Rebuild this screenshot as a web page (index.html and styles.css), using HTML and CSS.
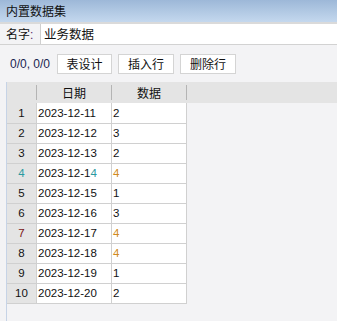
FILE: index.html
```html
<!DOCTYPE html>
<html lang="zh">
<head>
<meta charset="utf-8">
<title>内置数据集</title>
<link rel="stylesheet" href="styles.css">
</head>
<body>
<div class="window">
  <div class="titlebar">内置数据集</div>
  <div class="name-row">
    <span class="name-label">名字<span class="colon">:</span></span>
    <div class="name-input">业务数据</div>
  </div>
  <div class="toolbar">
    <span class="pos">0/0, 0/0</span>
    <button class="btn btn-design">表设计</button>
    <button class="btn">插入行</button>
    <button class="btn">删除行</button>
  </div>
  <div class="grid">
    <div class="head">
      <div class="hcell c-num"></div>
      <div class="hcell c-date">日期</div>
      <div class="hcell c-val">数据</div>
    </div>
    <div class="row"><div class="cell c-num">1</div><div class="cell c-date">2023-12-11</div><div class="cell c-val">2</div></div>
    <div class="row"><div class="cell c-num">2</div><div class="cell c-date">2023-12-12</div><div class="cell c-val">3</div></div>
    <div class="row"><div class="cell c-num">3</div><div class="cell c-date">2023-12-13</div><div class="cell c-val">2</div></div>
    <div class="row"><div class="cell c-num"><span class="t-teal">4</span></div><div class="cell c-date">2023-12-1<span class="t-teal">4</span></div><div class="cell c-val"><span class="t-orange">4</span></div></div>
    <div class="row"><div class="cell c-num">5</div><div class="cell c-date">2023-12-15</div><div class="cell c-val">1</div></div>
    <div class="row"><div class="cell c-num">6</div><div class="cell c-date">2023-12-16</div><div class="cell c-val">3</div></div>
    <div class="row"><div class="cell c-num"><span class="t-red">7</span></div><div class="cell c-date">2023-12-17</div><div class="cell c-val"><span class="t-orange">4</span></div></div>
    <div class="row"><div class="cell c-num">8</div><div class="cell c-date">2023-12-18</div><div class="cell c-val"><span class="t-orange">4</span></div></div>
    <div class="row"><div class="cell c-num">9</div><div class="cell c-date">2023-12-19</div><div class="cell c-val">1</div></div>
    <div class="row"><div class="cell c-num">10</div><div class="cell c-date">2023-12-20</div><div class="cell c-val">2</div></div>
  </div>
</div>
</body>
</html>
```

FILE: styles.css
```css
html, body {
  margin: 0;
  padding: 0;
}
body {
  width: 337px;
  height: 321px;
  overflow: hidden;
  background: #f3f3f5;
  font-family: "Noto Sans CJK SC", "Liberation Sans", sans-serif;
  font-size: 12px;
  color: #111;
}
.window {
  display: flex;
  flex-direction: column;
  height: 321px;
}
.titlebar {
  height: 22px;
  line-height: 22px;
  padding-left: 6px;
  background: linear-gradient(#9db8d8, #c4d8ee);
  border-bottom: 2px solid #dadada;
  color: #111;
  font-size: 12px;
}
.name-row {
  display: flex;
  height: 20px;
  border-bottom: 1px solid #d2d2d2;
}
.name-label {
  width: 34px;
  padding-left: 6px;
  line-height: 20px;
  font-size: 12px;
}
.colon {
  color: #5a2a6a;
  font-family: "Liberation Sans", sans-serif;
}
.name-input {
  flex: 1;
  background: #fff;
  border-left: 1px solid #cfcfcf;
  padding-left: 3px;
  line-height: 20px;
  font-size: 12.5px;
}
.toolbar {
  display: flex;
  align-items: center;
  gap: 6px;
  height: 20px;
  padding: 9px 0 8px 10px;
}
.pos {
  font-family: "Liberation Sans", sans-serif;
  font-size: 12px;
  color: #1a2550;
  margin-right: 1px;
}
.btn {
  height: 20px;
  width: 56px;
  padding: 0;
  margin: 0;
  background: #fff;
  border: 1px solid #d4d4d4;
  border-radius: 0;
  font-family: "Noto Sans CJK SC", sans-serif;
  font-size: 12px;
  color: #111;
  line-height: 18px;
}
.btn-design {
  width: 55px;
}
.grid {
  flex: 1;
  margin-left: 6px;
  border-left: 1px solid #c6d3e6;
}
.head {
  display: flex;
  height: 21px;
  background: #e4e4e4;
  align-items: center;
}
.hcell {
  height: 15px;
  line-height: 15px;
  text-align: center;
  border-right: 1px solid #b4b4b4;
  font-size: 12px;
}
.row {
  display: flex;
  height: 19px;
  border-bottom: 1px solid #d0d0d0;
  width: 180px;
}
.head + .row {
  height: 20px;
}
.cell {
  line-height: 19px;
  border-right: 1px solid #d0d0d0;
  background: #fff;
  font-family: "Liberation Sans", sans-serif;
  font-size: 11.5px;
  white-space: nowrap;
  overflow: hidden;
}
.head + .row .cell {
  line-height: 20px;
}
.c-num {
  width: 29px;
  text-align: center;
}
.cell.c-num {
  background: #e4e4e4;
}
.c-date {
  width: 74px;
}
.c-val {
  width: 74px;
}
.cell.c-date, .cell.c-val {
  padding-left: 1px;
  width: 73px;
}
.t-teal { color: #2a9aa0; }
.t-orange { color: #d08a20; }
.t-red { color: #7a1414; }
```
